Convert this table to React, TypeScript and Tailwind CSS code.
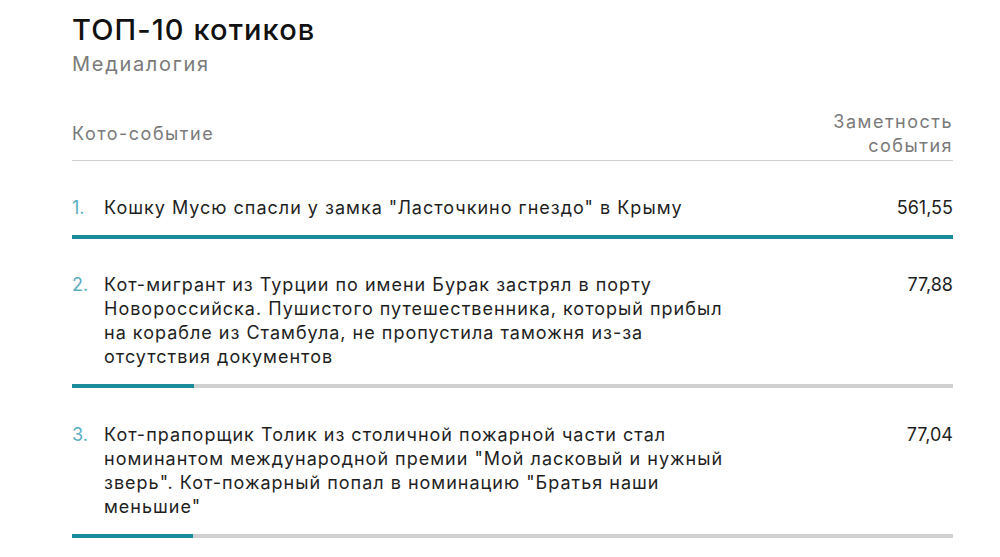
import React from "react";

const rows = [
  {
    n: "1.",
    lines: ['Кошку Мусю спасли у замка "Ласточкино гнездо" в Крыму'],
    v: "561,55",
    pct: 100,
  },
  {
    n: "2.",
    lines: [
      "Кот-мигрант из Турции по имени Бурак застрял в порту",
      "Новороссийска. Пушистого путешественника, который прибыл",
      "на корабле из Стамбула, не пропустила таможня из-за",
      "отсутствия документов",
    ],
    v: "77,88",
    pct: 13.87,
  },
  {
    n: "3.",
    lines: [
      "Кот-прапорщик Толик из столичной пожарной части стал",
      'номинантом международной премии "Мой ласковый и нужный',
      'зверь". Кот-пожарный попал в номинацию "Братья наши',
      'меньшие"',
    ],
    v: "77,04",
    pct: 13.72,
  },
];

export default function App() {
  return (
    <div
      className="w-[1000px] h-[557px] overflow-hidden bg-white"
      style={{ fontFamily: "Inter, 'Noto Sans', sans-serif" }}
    >
      <div className="ml-[72px] w-[881px] pt-[12px]">
        <h1 className="text-[29px] leading-[36px] font-medium text-[#111] tracking-[1.1px]">
          ТОП-10 котиков
        </h1>
        <div className="text-[20px] leading-[28px] text-[#7a7a7a] mt-[2px] tracking-[1.7px]">
          Медиалогия
        </div>

        <div className="mt-[32px] flex items-center justify-between border-b border-[#cfcfcf] pb-[2px]">
          <div className="text-[18px] leading-[24px] text-[#7a7a7a] tracking-[1.5px]">Кото-событие</div>
          <div className="text-[18px] leading-[24px] text-[#7a7a7a] text-right tracking-[1.5px]">
            Заметность
            <br />
            события
          </div>
        </div>

        {rows.map((r, i) => (
          <div key={i} className={i === 0 ? "pt-[35px]" : i === 1 ? "pt-[34px]" : "pt-[35px]"}>
            <div className="flex justify-between">
              <div className="flex">
                <span className="w-[32px] text-[18px] leading-[24px] text-[#5aaebe]">{r.n}</span>
                <div className="text-[18px] leading-[24px] text-[#1f1f1f] whitespace-nowrap tracking-[1px]">
                  {r.lines.map((l, j) => (
                    <div key={j}>{l}</div>
                  ))}
                </div>
              </div>
              <div className="text-[18px] leading-[24px] text-[#1f1f1f] text-right">{r.v}</div>
            </div>
            <div className="mt-[15px] h-[4px] bg-[#d0d0d0] flex">
              <div className="h-full bg-[#1a8b9b]" style={{ width: `${r.pct}%` }} />
            </div>
          </div>
        ))}
      </div>
    </div>
  );
}
